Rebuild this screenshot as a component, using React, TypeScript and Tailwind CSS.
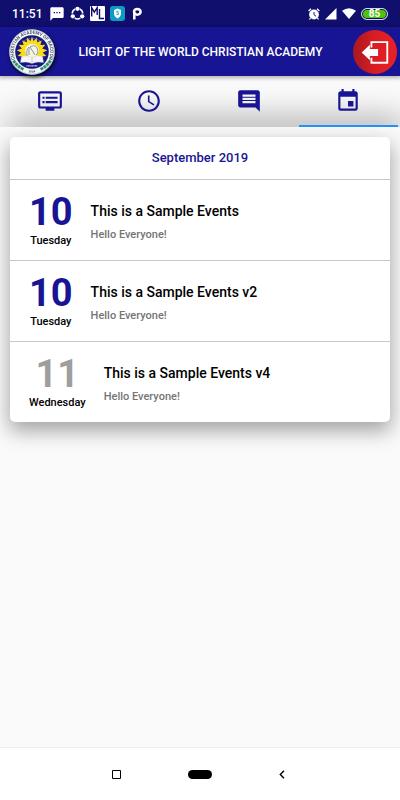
import { useState } from "react";
import clsx from "clsx";
import { MdAccessTime, MdComment, MdDvr, MdEvent, MdTextsms } from "react-icons/md";

interface SchoolEvent {
  id: number;
  day: string;
  weekday: string;
  title: string;
  text: string;
  past?: boolean;
}

const events: SchoolEvent[] = [
  { id: 1, day: "10", weekday: "Tuesday", title: "This is a Sample Events", text: "Hello Everyone!" },
  { id: 2, day: "10", weekday: "Tuesday", title: "This is a Sample Events v2", text: "Hello Everyone!" },
  { id: 3, day: "11", weekday: "Wednesday", title: "This is a Sample Events v4", text: "Hello Everyone!", past: true },
];

const tabs = [
  { id: "news", label: "News", Icon: MdDvr },
  { id: "schedule", label: "Schedule", Icon: MdAccessTime },
  { id: "messages", label: "Messages", Icon: MdComment },
  { id: "events", label: "Events", Icon: MdEvent },
];

function StatusBar() {
  return (
    <div className="flex h-[27px] items-center justify-between bg-[#110f6e] px-3 text-white">
      <div className="flex items-center gap-[5px]">
        <span className="mr-[2px] text-xs font-medium">11:51</span>
        <MdTextsms className="size-4" />
        {/* sharing ring */}
        <svg viewBox="0 0 16 16" className="size-[15px]" fill="none" stroke="currentColor" strokeWidth="1.6">
          <path d="M5.6 3.2A5.6 5.6 0 0 0 2.4 8M10.4 3.2A5.6 5.6 0 0 1 13.6 8M5 12.9a5.6 5.6 0 0 0 6 0" />
          <circle cx="8" cy="3" r="2.3" fill="currentColor" stroke="none" />
          <circle cx="3" cy="11" r="2.3" fill="currentColor" stroke="none" />
          <circle cx="13" cy="11" r="2.3" fill="currentColor" stroke="none" />
        </svg>
        {/* game badge */}
        <svg viewBox="0 0 15 15" className="size-[15px]" fill="none" stroke="#110f6e" strokeWidth="1.4">
          <rect width="15" height="15" rx="1" fill="#fff" stroke="none" />
          <path d="M1.7 10.5V1.7l2.6 4.5 2.9-4.5V9M9.5 3v9.500H14" />
        </svg>
        {/* shield badge */}
        <svg viewBox="0 0 15 15" className="size-[15px]">
          <rect width="15" height="15" rx="3" fill="#0c9cc4" />
          <path d="M7.5 2.5 11 4v3.4c0 2.2-1.5 4-3.5 5-2-1-3.5-2.8-3.5-5V4z" fill="#fff" />
          <path d="M8.8 5.3h-2v1.500h1.600v1.700H6.300" fill="none" stroke="#0c9cc4" strokeWidth=".8" />
        </svg>
        <svg viewBox="0 0 12 15" className="ml-px h-[15px] w-3" fill="none" stroke="currentColor" strokeWidth="2.500">
          <ellipse cx="6.300" cy="5.800" rx="3.300" ry="2.900" />
          <path d="M3.300 6v7.500" />
        </svg>
      </div>
      <div className="flex items-center gap-[5px]">
        {/* alarm clock */}
        <svg viewBox="0 0 12 12" className="size-3">
          <circle cx="6" cy="6.5" r="4.9" fill="#fff" />
          <path d="M.6 3 3 .8M11.4 3 9 .8M2.5 10l-1 1.500M9.500 10l1 1.500" stroke="#fff" strokeWidth="1.3" />
          <path d="M6 4v2.700l2 1.600" stroke="#110f6e" strokeWidth="1" fill="none" />
        </svg>
        <svg viewBox="0 0 12 12" className="size-3">
          <path d="M0 11.500 11.500 0v11.500z" fill="#fff" />
        </svg>
        <svg viewBox="0 0 14 11" className="h-[11px] w-[14px]">
          <path d="M0 2.800Q7-2.400 14 2.800L7 11z" fill="#fff" />
        </svg>
        <div className="flex h-3 w-[27px] items-center justify-center rounded-full border border-[#d5d5ee] bg-[#4fc20c] text-[10px] leading-none font-bold shadow-[inset_0_0_0_1px_#110f6e]">
          85
        </div>
      </div>
    </div>
  );
}

function SchoolLogo() {
  return (
    <svg viewBox="0 0 48 48" className="size-12 shrink-0 drop-shadow-[1px_2px_2px_rgba(0,0,0,0.8)]" role="img" aria-label="School seal">
      <defs>
        <path id="seal-top" d="M7.5 32A18.3 18.3 0 1 1 40.5 32" />
        <path id="seal-bottom" d="M13 41.5A20.8 20.8 0 0 0 35 41.5" />
      </defs>
      <circle cx="24" cy="24" r="22.8" fill="#f3f5f7" />
      <circle cx="24" cy="24" r="22.2" fill="none" stroke="#7d9db3" strokeWidth=".5" />
      <text fill="#4a5561" fontSize="4.5" className="font-['Roboto',sans-serif] font-bold">
        <textPath href="#seal-top" startOffset="50%" textAnchor="middle">
          CHRISTIAN ACADEMY OF BACOOR
        </textPath>
      </text>
      <path d="M5.5 32.5Q9 38 15.5 41.5M42.5 32.5Q39 38 32.5 41.5" fill="none" stroke="#2b986c" strokeWidth="3" strokeDasharray="3 .5" />
      <text fill="#4a5561" fontSize="3" className="font-['Roboto',sans-serif] font-bold">
        <textPath href="#seal-bottom" startOffset="50%" textAnchor="middle">
          2004
        </textPath>
      </text>
      <circle cx="24" cy="24" r="16.8" fill="#171784" />
      <path
        d="M24 8.500l1.500 4.500 3.500-3.500.2 4.700 4.500-1.700-1.300 4.500 5-.2-3.200 3.700 5 1.700-4.500 2.500 3.700 3.300-5 .6 2 4.300H12.600l2-4.300-5-.6 3.700-3.300-4.500-2.500 5-1.700-3.200-3.700 5 .2-1.300-4.500 4.500 1.700.2-4.700 3.500 3.500z"
        fill="#fadb16"
      />
      <circle cx="24" cy="22.5" r="6.800" fill="#f8f5df" />
      <path d="M19 28q-1-7 2-9v8M27 27l-5-8q5-3 7 1c1.500 3 1 6-1 7" fill="none" stroke="#8a98aa" />
      <path d="M13.500 28.500Q19 26.500 24 29.500q5-3 10.500-1l1 6Q29 33 24 35.500q-5-2.500-11.500-1z" fill="#f5f6f8" stroke="#c3cbdc" strokeWidth=".4" />
      <path d="M24 29.500V35" stroke="#9aa6ba" strokeWidth=".6" />
      <path d="M18.500 37.800h11" stroke="#dfe5ef" strokeWidth="1.200" strokeDasharray="1 .4" />
      <path d="M15 13.500q9-6 18 0" fill="none" stroke="#8b93c2" strokeDasharray="1 .7" />
    </svg>
  );
}

function Header() {
  return (
    <header className="relative z-10 flex h-[49px] items-center bg-[#181594] pr-[3px] pl-2 shadow-[0_1px_4px_1px_rgba(0,0,0,0.3)]">
      <SchoolLogo />
      <h1 className="grow pr-2 text-center text-xs font-medium whitespace-nowrap text-white">
        LIGHT OF THE WORLD CHRISTIAN ACADEMY
      </h1>
      <button
        type="button"
        aria-label="Log out"
        className="size-11 shrink-0 rounded-full bg-linear-to-r from-[#a81820] via-[#da1d23] to-[#e92026]"
      >
        <svg viewBox="0 0 43 43" className="size-full">
          <path d="M18 17V11.800h15.500V32H18v-5" fill="none" stroke="#fff" strokeWidth="1.800" />
          <path d="M8.500 22 16.500 14.500V18.500h8v7h-8v4z" fill="#fff" />
        </svg>
      </button>
    </header>
  );
}

function TabBar({ active, onChange }: { active: string; onChange: (id: string) => void }) {
  return (
    <nav className="relative grid h-[51px] grid-cols-4 overflow-hidden bg-[#fafafa] pr-[2px]">
      <div className="pointer-events-none absolute right-2 bottom-0 left-5 shadow-[0_4px_32px_12px_rgba(0,0,0,0.35)]" />
      {tabs.map(({ id, label, Icon }) => (
        <button
          key={id}
          type="button"
          aria-label={label}
          onClick={() => onChange(id)}
          className={clsx(
            "relative flex items-center justify-center border-b-2 text-[#181594]",
            active === id ? "border-[#2390f5]" : "border-transparent",
          )}
        >
          <Icon className="size-[26px]" />
        </button>
      ))}
    </nav>
  );
}

function EventRow({ event }: { event: SchoolEvent }) {
  return (
    <li className="flex h-[81px] items-center gap-[18px] border-t border-[#c8c8c8] px-[19px] pt-1">
      <div className="flex flex-col items-center">
        <span className={clsx("text-[38px] leading-[38px] font-bold", event.past ? "text-[#9e9e9e]" : "text-[#181594]")}>
          {event.day}
        </span>
        <span className="text-[11px] leading-5 font-medium text-black">{event.weekday}</span>
      </div>
      <div className="pt-[2px]">
        <h3 className="text-sm leading-6 font-medium text-black">{event.title}</h3>
        <p className="text-[11px] leading-6 font-medium text-[#757575]">{event.text}</p>
      </div>
    </li>
  );
}

function SystemNav() {
  return (
    <footer className="grid h-[53px] grid-cols-[1fr_auto_1fr] items-center gap-[67px] border-t border-[#eeeeee] bg-white text-black">
      <button type="button" aria-label="Recent apps" className="justify-self-end">
        <svg viewBox="0 0 9 9" className="size-[9px]" fill="none" stroke="currentColor">
          <path d="M.5.5h8v8h-8z" />
        </svg>
      </button>
      <button type="button" aria-label="Home" className="h-[9px] w-6 rounded-full bg-black" />
      <button type="button" aria-label="Back" className="justify-self-start">
        <svg viewBox="0 0 9 9" className="size-[9px]" fill="none" stroke="currentColor" strokeWidth="1.4">
          <path d="M5 .8 1.300 4.500 5 8.200" />
        </svg>
      </button>
    </footer>
  );
}

export default function App() {
  const [tab, setTab] = useState("events");

  return (
    <div className="flex min-h-screen flex-col bg-[#fafafa] font-['Roboto',sans-serif]">
      <StatusBar />
      <Header />
      <TabBar active={tab} onChange={setTab} />
      <main className="grow overflow-hidden p-[10px]">
        <section className="rounded-[5px] bg-white shadow-[0_8px_20px_1px_rgba(0,0,0,0.35)]">
          <h2 className="text-center text-[13px] leading-[42px] font-medium text-[#181594]">September 2019</h2>
          <ul>
            {events.map((event) => (
              <EventRow key={event.id} event={event} />
            ))}
          </ul>
        </section>
      </main>
      <SystemNav />
    </div>
  );
}
